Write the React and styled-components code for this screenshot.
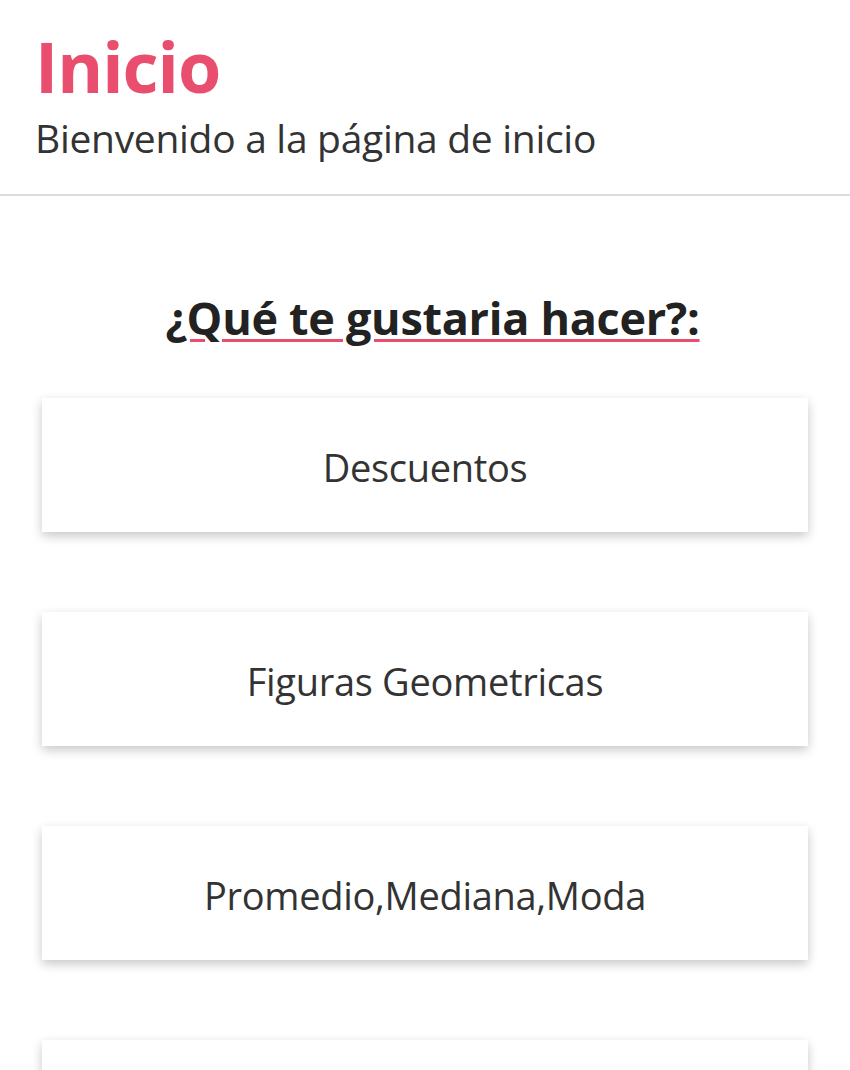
import React from "react";
import styled, { createGlobalStyle } from "styled-components";

const Global = createGlobalStyle`
  html, body { margin: 0; padding: 0; background: #fff; }
  body { font-family: "Open Sans", "Noto Sans", sans-serif; color: #333; }
`;

const Header = styled.header`
  padding: 26px 35px 28px;
  border-bottom: 2px solid #dcdcdc;
`;

const Title = styled.h1`
  margin: 0;
  font-size: 70px;
  line-height: 80px;
  font-weight: 700;
  color: #e94e6e;
  letter-spacing: -1px;
`;

const Subtitle = styled.p`
  margin: 4px 0 0;
  font-size: 39px;
  line-height: 56px;
  color: #333;
  letter-spacing: -0.3px;
`;

const Main = styled.main`
  padding: 94px 42px 40px;
  display: flex;
  flex-direction: column;
  align-items: center;
`;

const Question = styled.h2`
  margin: 0 0 52px 15px;
  font-size: 45px;
  line-height: 56px;
  font-weight: 700;
  color: #222;
  text-decoration: underline;
  text-decoration-color: #e94e6e;
  text-decoration-thickness: 3px;
  text-underline-offset: 4px;
  letter-spacing: -0.3px;
`;

const List = styled.div`
  align-self: stretch;
  display: flex;
  flex-direction: column;
  gap: 80px;
`;

const Card = styled.button`
  height: 134px;
  padding: 4px 0 0;
  border: none;
  background: #fff;
  box-shadow: 0 4px 10px rgba(0, 0, 0, 0.22);
  font-family: inherit;
  font-size: 38px;
  color: #333;
  cursor: pointer;
  letter-spacing: -0.3px;
`;

const items = ["Descuentos", "Figuras Geometricas", "Promedio,Mediana,Moda", "Conversiones"];

export default function App() {
  return (
    <>
      <Global />
      <Header>
        <Title>Inicio</Title>
        <Subtitle>Bienvenido a la página de inicio</Subtitle>
      </Header>
      <Main>
        <Question>¿Qué te gustaria hacer?:</Question>
        <List>
          {items.map((t) => (
            <Card key={t}>{t}</Card>
          ))}
        </List>
      </Main>
    </>
  );
}
